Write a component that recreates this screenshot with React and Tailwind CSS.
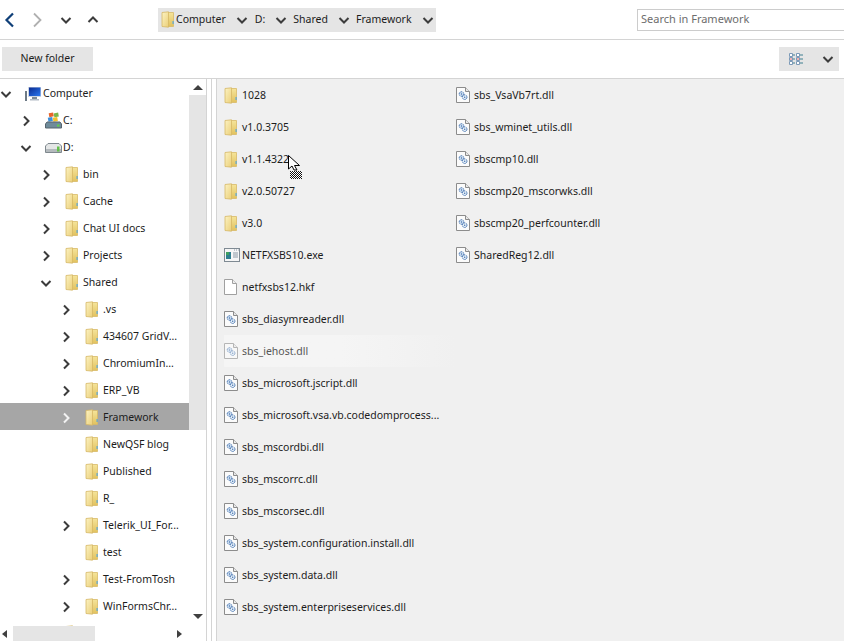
const FONT = "font-['Noto_Sans','Open_Sans',sans-serif]";

function Chev({ dir = "right", color = "#3c3c3c", size = 12, sw = 2 }) {
  const pts = {
    right: "4,1.5 8.5,6 4,10.5",
    left: "8,1.5 3.5,6 8,10.5",
    down: "1.5,4 6,8.5 10.5,4",
    up: "1.5,8 6,3.5 10.5,8",
  }[dir];
  return (
    <svg width={size} height={size} viewBox="0 0 12 12" className="shrink-0">
      <polyline points={pts} fill="none" stroke={color} strokeWidth={sw} />
    </svg>
  );
}

function Folder() {
  return (
    <svg width="14" height="17" viewBox="0 0 14 17" className="shrink-0">
      <defs>
        <linearGradient id="fb" x1="0" y1="0" x2="0" y2="1">
          <stop offset="0" stopColor="#f5e49a" />
          <stop offset="1" stopColor="#e2c25e" />
        </linearGradient>
        <linearGradient id="ff" x1="0" y1="0" x2="1" y2="1">
          <stop offset="0" stopColor="#fcf3c4" />
          <stop offset="1" stopColor="#ebcf78" />
        </linearGradient>
      </defs>
      <path d="M6 1.5H12.5V15.5H6Z" fill="url(#fb)" stroke="#d8ba68" strokeWidth="0.8" />
      <path d="M1 1.500L7.500 .8V16.200L1 15.500Z" fill="url(#ff)" stroke="#d5b766" strokeWidth="0.8" />
      <rect x="11.500" y="10" width="1.200" height="3" fill="#5aa8d8" />
    </svg>
  );
}

function Dll({ faded }) {
  return (
    <svg width="14" height="16" viewBox="0 0 14 16" className={`shrink-0 ${faded ? "opacity-60" : ""}`}>
      <path d="M.5.5H9.5L13.5 4.5V15.5H.5Z" fill="#fbfbfb" stroke="#8c8c8c" />
      <path d="M9.5.5V4.5H13.5" fill="#e8e8e8" stroke="#8c8c8c" />
      <circle cx="5.500" cy="7" r="2.300" fill="#cfe0f2" stroke="#3f6fae" strokeWidth="1" strokeDasharray="1.500 .7" />
      <circle cx="8.700" cy="10.200" r="2.300" fill="#e4eef8" stroke="#3f6fae" strokeWidth="1" strokeDasharray="1.500 .7" />
      <circle cx="5.500" cy="7" r="0.700" fill="#3f6fae" />
      <circle cx="8.700" cy="10.200" r="0.700" fill="#3f6fae" />
    </svg>
  );
}

function Exe() {
  return (
    <svg width="16" height="14" viewBox="0 0 16 14" className="shrink-0">
      <rect x=".5" y=".5" width="15" height="13" fill="#f6f6f6" stroke="#7f8a93" />
      <path d="M10 2H11M12 2H13M14 2H14.800" stroke="#8b99a6" />
      <rect x="2" y="4" width="5" height="7" fill="#2f7f8f" />
      <rect x="2" y="4" width="3" height="3" fill="#3fa060" />
      <path d="M9 5H14M9 7H14M9 9H14" stroke="#8b99a6" />
    </svg>
  );
}

function Blank() {
  return (
    <svg width="13" height="16" viewBox="0 0 13 16" className="shrink-0">
      <path d="M.5.5H8.5L12.5 4.5V15.5H.5Z" fill="#fff" stroke="#a0a0a0" />
      <path d="M8.5.5V4.5H12.5" fill="#eee" stroke="#a0a0a0" />
    </svg>
  );
}

function ComputerIcon() {
  return (
    <svg width="16" height="16" viewBox="0 0 16 16" className="shrink-0">
      <defs>
        <linearGradient id="scr" x1="0" y1="0" x2="1" y2="1">
          <stop offset="0" stopColor="#0a2a90" />
          <stop offset="1" stopColor="#2a78f0" />
        </linearGradient>
      </defs>
      <rect x="0" y="5" width="2" height="10" fill="#6d7a86" />
      <rect x="3" y="1" width="13" height="10" fill="#cdd6e2" />
      <rect x="4" y="1.500" width="11.500" height="8.500" fill="url(#scr)" />
      <rect x="7" y="11" width="5" height="2" fill="#7d8a96" />
      <rect x="5" y="13" width="9" height="1.500" fill="#b3bcc6" />
    </svg>
  );
}

function DriveC() {
  return (
    <svg width="17" height="17" viewBox="0 0 17 17" className="shrink-0">
      <rect x="4" y="1" width="4.500" height="4" fill="#e8662c" transform="rotate(-10 5 3)" />
      <rect x="9" y="1" width="4.500" height="4" fill="#7ab648" transform="rotate(-10 11 3)" />
      <rect x="3" y="5.500" width="4.500" height="4" fill="#3f8fd8" transform="rotate(-10 5 7)" />
      <rect x="8" y="5.500" width="4.500" height="4" fill="#f2c12e" transform="rotate(-10 10 7)" />
      <path d="M2 10H15L16.500 12V16H.5V12Z" fill="#6f8b9a" stroke="#56646e" />
      <rect x="12" y="12.500" width="2.500" height="2" fill="#62d04a" />
    </svg>
  );
}

function DriveD() {
  return (
    <svg width="17" height="10" viewBox="0 0 17 10" className="shrink-0">
      <path d="M3 .5H14L16.500 3V9.500H.5V3Z" fill="#e4e6e6" stroke="#7f888e" />
      <path d="M1 6H16V9H1Z" fill="#b4babd" />
      <rect x="12" y="3.500" width="2.500" height="5" fill="#62c04a" />
    </svg>
  );
}

function Tri({ dir }) {
  const cls = {
    up: "border-x-[5px] border-b-[5px] border-x-transparent border-b-[#404040]",
    down: "border-x-[5px] border-t-[5px] border-x-transparent border-t-[#404040]",
    left: "border-y-[4px] border-r-[5px] border-y-transparent border-r-[#404040]",
    right: "border-y-[4px] border-l-[5px] border-y-transparent border-l-[#404040]",
  }[dir];
  return <div className={`w-0 h-0 ${cls}`} />;
}

const tree = [
  { n: "Computer", pad: "pl-0", open: true, icon: "pc" },
  { n: "C:", pad: "pl-5", arrow: true, icon: "c" },
  { n: "D:", pad: "pl-5", open: true, icon: "d" },
  { n: "bin", pad: "pl-10", arrow: true },
  { n: "Cache", pad: "pl-10", arrow: true },
  { n: "Chat UI docs", pad: "pl-10", arrow: true },
  { n: "Projects", pad: "pl-10", arrow: true },
  { n: "Shared", pad: "pl-10", open: true },
  { n: ".vs", pad: "pl-[60px]", arrow: true },
  { n: "434607 GridV...", pad: "pl-[60px]", arrow: true },
  { n: "ChromiumIn...", pad: "pl-[60px]", arrow: true },
  { n: "ERP_VB", pad: "pl-[60px]", arrow: true },
  { n: "Framework", pad: "pl-[60px]", arrow: true, sel: true },
  { n: "NewQSF blog", pad: "pl-[60px]" },
  { n: "Published", pad: "pl-[60px]" },
  { n: "R_", pad: "pl-[60px]" },
  { n: "Telerik_UI_For...", pad: "pl-[60px]", arrow: true },
  { n: "test", pad: "pl-[60px]" },
  { n: "Test-FromTosh", pad: "pl-[60px]", arrow: true },
  { n: "WinFormsChr...", pad: "pl-[60px]", arrow: true },
  { n: "", pad: "pl-10" },
];

const files = [
  ["1028", "folder"], ["v1.0.3705", "folder"], ["v1.1.4322", "folder"], ["v2.0.50727", "folder"], ["v3.0", "folder"],
  ["NETFXSBS10.exe", "exe"], ["netfxsbs12.hkf", "blank"], ["sbs_diasymreader.dll", "dll"], ["sbs_iehost.dll", "faded"],
  ["sbs_microsoft.jscript.dll", "dll"], ["sbs_microsoft.vsa.vb.codedomprocess...", "dll"], ["sbs_mscordbi.dll", "dll"],
  ["sbs_mscorrc.dll", "dll"], ["sbs_mscorsec.dll", "dll"], ["sbs_system.configuration.install.dll", "dll"],
  ["sbs_system.data.dll", "dll"], ["sbs_system.enterpriseservices.dll", "dll"],
];
const files2 = ["sbs_VsaVb7rt.dll", "sbs_wminet_utils.dll", "sbscmp10.dll", "sbscmp20_mscorwks.dll", "sbscmp20_perfcounter.dll", "SharedReg12.dll"];

function FileRow({ name, kind }) {
  return (
    <div className={`h-8 flex items-center ${kind === "faded" ? "bg-linear-to-r from-[#f5f5f5] via-[#f5f5f5] to-[#f0f0f0] text-[#555]" : ""}`}>
      <div className="w-[17px] flex items-center shrink-0">
        {kind === "folder" && <Folder />}
        {kind === "exe" && <Exe />}
        {kind === "blank" && <Blank />}
        {kind === "dll" && <Dll />}
        {kind === "faded" && <Dll faded />}
      </div>
      <span className="whitespace-nowrap pt-[2px] pl-px">{name}</span>
    </div>
  );
}

function Crumb({ children }) {
  return (
    <div className="flex items-center gap-[10px] mr-[6px]">
      <span className="whitespace-nowrap">{children}</span>
      <Chev dir="down" />
    </div>
  );
}

export default function App() {
  return (
    <div className={`w-[844px] h-[641px] overflow-hidden bg-white flex flex-col text-[10.5px] text-[#1c1c1c] ${FONT}`}>
      <div className="h-10 border-b border-[#d4d4d4] flex items-center shrink-0">
        <div className="flex items-center ml-[3px] gap-[13px]">
          <svg width="14" height="16" viewBox="0 0 14 16"><polyline points="10,1.5 3.5,8 10,14.5" fill="none" stroke="#0f3f78" strokeWidth="2.2" /></svg>
          <svg width="14" height="16" viewBox="0 0 14 16"><polyline points="4,1.5 10.5,8 4,14.5" fill="none" stroke="#b0b0b0" strokeWidth="1.8" /></svg>
          <div className="ml-[3px] flex items-center gap-[15px]">
            <Chev dir="down" />
            <Chev dir="up" />
          </div>
        </div>
        <div className="ml-[59px] h-6 w-[278px] bg-[#e5e5e5] flex items-center pl-[3px] shrink-0">
          <div className="w-[15px] shrink-0 flex items-center"><Folder /></div>
          <div className="pr-px flex items-center"><Crumb>Computer</Crumb></div>
          <Crumb>D:</Crumb>
          <Crumb>Shared</Crumb>
          <Crumb>Framework</Crumb>
        </div>
        <div className="ml-auto w-[207px] h-[22px] border border-[#cccccc] border-r-0 text-[11px] text-[#6d6d6d] flex items-center pl-[3px]">Search in Framework</div>
      </div>
      <div className="h-[39px] border-b border-[#d4d4d4] flex items-center justify-between pl-[2px] pr-[5px] shrink-0">
        <div className="w-[91px] h-6 bg-[#e5e5e5] flex items-center justify-center">New folder</div>
        <div className="w-[60px] h-6 bg-[#e5e5e5] flex items-center justify-between pl-[9px] pr-[5px]">
          <svg width="16" height="14" viewBox="0 0 16 14">
            <path d="M1.500 1.500h3v3h-3zM1.500 5.500h3v3h-3zM1.500 9.500h3v3h-3zM8.500 1.500h3v3h-3zM8.500 5.500h3v3h-3zM8.500 9.500h3v3h-3z" fill="#fff" stroke="#7d9ab8" />
            <path d="M5 3h2M5 7h2M5 11h2M12 3h3M12 7h3M12 11h3" stroke="#3f7f90" />
            <path d="M2.500 7h1M9.500 7h1" stroke="#d83030" strokeWidth="1.500" />
          </svg>
          <Chev dir="down" />
        </div>
      </div>
      <div className="flex-1 flex min-h-0 relative">
        <div className="w-[207px] shrink-0 border-r border-[#d4d4d4] flex flex-col">
          <div className="flex-1 flex min-h-0">
            <div className="w-[189px] overflow-hidden shrink-0">
              {tree.map((t, i) => (
                <div key={i} className={`h-[27px] pt-[2px] flex items-center ${t.pad} ${t.sel ? "bg-[#a6a6a6]" : ""}`}>
                  <div className="w-[25px] flex items-center shrink-0">
                    {t.open && <Chev dir="down" />}
                    {t.arrow && <Chev dir="right" color={t.sel ? "#f2f2f2" : "#3c3c3c"} />}
                  </div>
                  <div className="w-[18px] flex items-center shrink-0">
                    {t.icon === "pc" && <ComputerIcon />}
                    {t.icon === "c" && <DriveC />}
                    {t.icon === "d" && <DriveD />}
                    {!t.icon && <Folder />}
                  </div>
                  <span className="whitespace-nowrap">{t.n}</span>
                </div>
              ))}
            </div>
            <div className="w-[17px] flex flex-col shrink-0">
              <div className="h-4 flex items-center justify-center"><Tri dir="up" /></div>
              <div className="h-[335px] bg-[#e5e5e5]" />
              <div className="flex-1" />
              <div className="h-[18px] pb-[2px] flex items-center justify-center"><Tri dir="down" /></div>
            </div>
          </div>
          <div className="h-[15px] flex items-center shrink-0">
            <div className="w-[13px] pl-[2px] flex"><Tri dir="left" /></div>
            <div className="w-[82px] h-full bg-[#e5e5e5]" />
            <div className="ml-[82px] w-[13px] flex"><Tri dir="right" /></div>
          </div>
        </div>
        <div className="w-[5px] shrink-0 border-r border-[#d4d4d4]" />
        <div className="w-[5px] shrink-0 border-r border-[#d4d4d4]" />
        <div className="flex-1 bg-[#f0f0f0] pl-[7px] flex">
          <div className="w-[232px] shrink-0">
            {files.map(([n, k]) => <FileRow key={n} name={n} kind={k} />)}
          </div>
          <div>
            {files2.map((n) => <FileRow key={n} name={n} kind="dll" />)}
          </div>
        </div>
        <svg width="18" height="28" viewBox="0 0 18 28" className="absolute left-[288px] top-[76px]">
          <defs>
            <pattern id="dots" width="2" height="2" patternUnits="userSpaceOnUse">
              <rect width="2" height="2" fill="#fff" />
              <rect width="1" height="1" fill="#111" />
              <rect x="1" y="1" width="1" height="1" fill="#111" />
            </pattern>
          </defs>
          <rect x="2" y="16" width="12" height="8" fill="url(#dots)" />
          <path d="M.5.5V14L4 11L6 15H9L6.500 10.500H11.500Z" fill="#fff" stroke="#000" />
        </svg>
      </div>
    </div>
  );
}
